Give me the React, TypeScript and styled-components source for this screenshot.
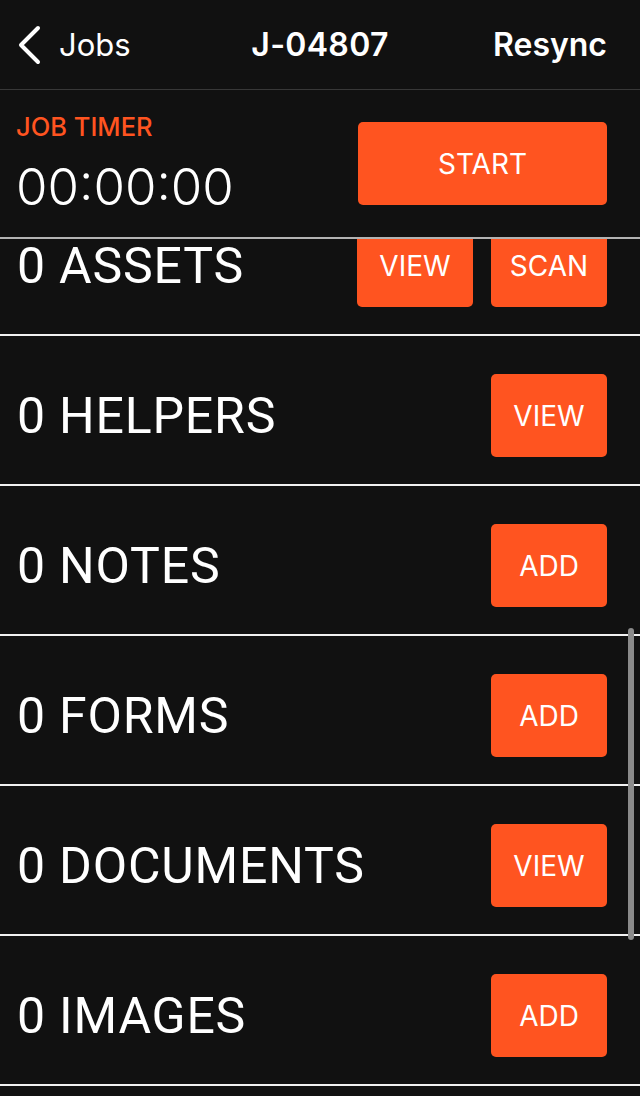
import React, { useLayoutEffect, useRef } from 'react';
import styled, { createGlobalStyle } from 'styled-components';

const ORANGE = '#ff5420';

const GlobalStyle = createGlobalStyle`
  html, body {
    margin: 0;
    padding: 0;
    background: #111111;
  }
  body {
    font-family: Inter, "Noto Sans", "Liberation Sans", sans-serif;
    color: #ffffff;
  }
`;

const Screen = styled.div`
  width: 640px;
  height: 1096px;
  display: flex;
  flex-direction: column;
  background: #111111;
  overflow: hidden;
`;

const NavBar = styled.header`
  height: 89px;
  flex: none;
  display: grid;
  grid-template-columns: 1fr auto 1fr;
  align-items: center;
  padding: 0 25px;
  border-bottom: 1px solid #383838;
`;

const BackLink = styled.button`
  display: flex;
  align-items: center;
  gap: 17px;
  margin-left: -9px;
  background: none;
  border: none;
  padding: 0;
  color: #ffffff;
  font: 400 31px Inter, "Liberation Sans", sans-serif;
  justify-self: start;
  cursor: pointer;
`;

const Title = styled.h1`
  margin: 0;
  font-size: 32px;
  font-weight: 600;
  letter-spacing: 0.3px;
`;

const NavAction = styled.button`
  justify-self: end;
  margin-right: 8px;
  background: none;
  border: none;
  padding: 0;
  color: #ffffff;
  font: 600 32px Inter, "Liberation Sans", sans-serif;
  cursor: pointer;
`;

const TimerPanel = styled.section`
  height: 149px;
  flex: none;
  box-sizing: border-box;
  display: flex;
  align-items: center;
  justify-content: space-between;
  padding: 0 33px 0 16px;
  border-bottom: 2px solid #b3b3b3;
`;

const TimerText = styled.div`
  display: flex;
  flex-direction: column;
  gap: 21px;
  margin-top: -1px;
`;

const TimerLabel = styled.span`
  color: ${ORANGE};
  font-size: 25.5px;
  font-weight: 500;
  line-height: 26px;
`;

const TimerValue = styled.span`
  font-size: 51px;
  font-weight: 300;
  line-height: 52px;
`;

const ActionButton = styled.button<{ $wide?: boolean }>`
  width: ${p => (p.$wide ? '249px' : '116px')};
  height: 83px;
  background: ${ORANGE};
  border: none;
  border-radius: 5px;
  color: #ffffff;
  font: 400 28px Inter, "Liberation Sans", sans-serif;
  display: flex;
  align-items: center;
  justify-content: center;
  cursor: pointer;
`;

const ListViewport = styled.div`
  position: relative;
  flex: 1;
  min-height: 0;
`;

const ListScroll = styled.div`
  height: 100%;
  overflow-y: auto;
  scrollbar-width: none;
  &::-webkit-scrollbar {
    display: none;
  }
`;

const Row = styled.div`
  display: flex;
  align-items: center;
  justify-content: space-between;
  padding: 38px 33px 27px 16px;
  border-bottom: 2px solid #f2f2f2;
`;

const RowLabel = styled.span`
  font-family: Roboto, Inter, "Liberation Sans", sans-serif;
  font-size: 50px;
  font-weight: 400;
  letter-spacing: 0.8px;
  margin-left: 1px;
`;

const ButtonGroup = styled.div`
  display: flex;
  gap: 18px;
`;

const ScrollThumb = styled.div`
  position: absolute;
  right: 6px;
  top: 389px;
  width: 6px;
  height: 312px;
  border-radius: 3px;
  background: #8a8a8a;
  pointer-events: none;
`;

const ChevronLeft = () => (
  <svg width="26" height="40" viewBox="0 0 26 40" fill="none">
    <path d="M22 3 L5 20 L22 37" stroke="#ffffff" strokeWidth="4" strokeLinecap="round" strokeLinejoin="round" />
  </svg>
);

const SECTIONS: { label: string; actions: string[] }[] = [
  { label: '0 ASSETS', actions: ['VIEW', 'SCAN'] },
  { label: '0 HELPERS', actions: ['VIEW'] },
  { label: '0 NOTES', actions: ['ADD'] },
  { label: '0 FORMS', actions: ['ADD'] },
  { label: '0 DOCUMENTS', actions: ['VIEW'] },
  { label: '0 IMAGES', actions: ['ADD'] },
  { label: '0 SIGNATURES', actions: ['ADD'] },
  { label: '0 EXPENSES', actions: ['ADD'] },
];

export default function App() {
  const scrollRef = useRef<HTMLDivElement>(null);

  useLayoutEffect(() => {
    if (scrollRef.current) scrollRef.current.scrollTop = 53;
  }, []);

  return (
    <Screen>
      <GlobalStyle />
      <NavBar>
        <BackLink>
          <ChevronLeft />
          Jobs
        </BackLink>
        <Title>J-04807</Title>
        <NavAction>Resync</NavAction>
      </NavBar>

      <TimerPanel>
        <TimerText>
          <TimerLabel>JOB TIMER</TimerLabel>
          <TimerValue>00:00:00</TimerValue>
        </TimerText>
        <ActionButton $wide>START</ActionButton>
      </TimerPanel>

      <ListViewport>
        <ListScroll ref={scrollRef}>
          {SECTIONS.map(s => (
            <Row key={s.label}>
              <RowLabel>{s.label}</RowLabel>
              <ButtonGroup>
                {s.actions.map(a => (
                  <ActionButton key={a}>{a}</ActionButton>
                ))}
              </ButtonGroup>
            </Row>
          ))}
        </ListScroll>
        <ScrollThumb />
      </ListViewport>
    </Screen>
  );
}
